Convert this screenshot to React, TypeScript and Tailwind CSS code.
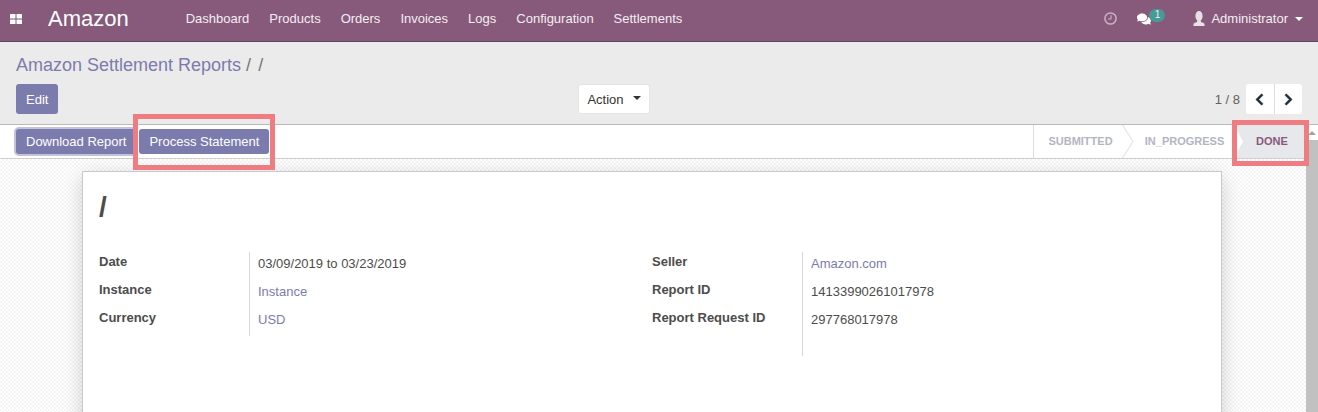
import { FaComments, FaChevronLeft, FaChevronRight } from "react-icons/fa";

const menu = ["Dashboard", "Products", "Orders", "Invoices", "Logs", "Configuration", "Settlements"];

function Caret() {
  return <span className="inline-block h-0 w-0 border-x-4 border-t-4 border-x-transparent border-t-current" />;
}

function Field({ label, value, link, tall }: { label: string; value: string; link?: boolean; tall?: boolean }) {
  return (
    <div className={`flex ${tall ? "h-[48px]" : "h-[28px]"}`}>
      <div className="w-[150px] shrink-0 pt-[1px] text-[13px] leading-[18px] font-bold text-[#4c4c4c]">{label}</div>
      <div
        className={`border-l border-[#d9d7d7] pl-2 pt-[3px] text-[13px] leading-[18px] ${
          link ? "text-[#7c7bad]" : "text-[#4c4c4c]"
        }`}
      >
        {value}
      </div>
    </div>
  );
}

export default function App() {
  return (
    <div className="relative h-[412px] w-[1318px] overflow-hidden bg-white font-['Liberation_Sans',Arial,sans-serif] text-[13px] text-[#4c4c4c]">
      {/* Top navbar */}
      <nav className="flex h-[42px] items-center border-b border-[#5e4a5c] bg-[#875a7b] pb-1 text-white">
        <svg className="ml-[10px] h-[10px] w-[12px]" viewBox="0 0 12 10" fill="#fff">
          <rect x="0" y="0" width="5.5" height="4.5" rx="0.5" />
          <rect x="6.5" y="0" width="5.5" height="4.5" rx="0.5" />
          <rect x="0" y="5.5" width="5.5" height="4.5" rx="0.5" />
          <rect x="6.5" y="5.5" width="5.5" height="4.5" rx="0.5" />
        </svg>
        <span className="ml-[26px] text-[22px] leading-none">Amazon</span>
        <div className="ml-[57px] flex gap-5">
          {menu.map((item) => (
            <span key={item} className="text-[13px] text-[#f3eef2]">
              {item}
            </span>
          ))}
        </div>
        <div className="ml-auto flex items-center">
          <svg className="h-[13px] w-[13px]" viewBox="0 0 13 13" fill="none" stroke="#c9b3c4" strokeWidth="1.5">
            <circle cx="6.5" cy="6.5" r="5.6" />
            <path d="M7 3.2 V7 H4" strokeWidth="1.1" />
          </svg>
          <div className="relative ml-5 mr-[42px]">
            <FaComments className="text-[14px]" />
            <span className="absolute -top-[3px] left-[12px] flex h-[13px] w-[16px] items-center justify-center rounded-full bg-[#479a96] text-[10px] leading-none text-[#e7f3f2]">
              1
            </span>
          </div>
          <svg className="h-[15px] w-[12px]" viewBox="0 0 12 15" fill="#e8e0e6">
            <ellipse cx="6" cy="5" rx="3.6" ry="5" />
            <path d="M4.3 9 H7.7 L8 11 C9.5 11.6 11 12 11.5 13 V15 H0.5 V13 C1 12 2.5 11.6 4 11 Z" />
          </svg>
          <span className="ml-[6px] text-[13px] text-[#f3eef2]">Administrator</span>
          <span className="ml-[7px] mr-[15px] flex text-white">
            <Caret />
          </span>
        </div>
      </nav>

      {/* Control panel */}
      <section className="h-[83px] border-b border-[#b9b9b9] bg-[#ebebeb] pl-4 pr-4">
        <div className="pt-[12px] text-[18px] leading-[23px] text-[#7c7bad]">
          Amazon Settlement Reports <span className="text-[#777]">/</span>
          <span className="ml-[7px] text-[#777]">/</span>
        </div>
        <div className="mt-[7px] flex items-start justify-between">
          <button className="h-[30px] rounded-[3px] bg-[#7c7bad] px-[10px] pt-[1px] text-[13px] text-white">Edit</button>
          <button className="ml-[520px] flex h-[30px] w-[72px] items-center gap-2 rounded-[3px] border border-[#e4e4e4] bg-white pl-[8px] pt-[1px] text-[13px] text-[#333]">
            Action
            <span className="mb-[3px] ml-[1px] flex">
              <Caret />
            </span>
          </button>
          <div className="ml-auto flex items-center">
            <span className="mr-[6px] pt-[1px] text-[13px] text-[#5f5f5f]">1 / 8</span>
            <div className="flex h-[30px] rounded-[3px] bg-white text-[#1d2b3a]">
              <span className="flex w-[29px] items-center justify-center border-r border-[#ddd]">
                <FaChevronLeft className="-ml-[1px] text-[13px]" stroke="currentColor" strokeWidth={24} />
              </span>
              <span className="flex w-[27px] items-center justify-center">
                <FaChevronRight className="text-[13px]" stroke="currentColor" strokeWidth={24} />
              </span>
            </div>
          </div>
        </div>
      </section>

      {/* Status bar */}
      <header className="flex h-[34px] items-center justify-between border-b border-[#cfcfcf] pl-[16px] pr-[12px]">
        <div className="flex gap-[3px]">
          <button className="h-[25px] rounded-[3px] bg-[#7c7bad] px-[10px] text-[13px] text-white ring-2 ring-[#c3c2d9]">
            Download Report
          </button>
          <button className="h-[25px] rounded-[3px] bg-[#7c7bad] px-[10px] text-[13px] text-white">
            Process Statement
          </button>
        </div>
        <div className="flex h-full items-stretch text-[11px] font-bold">
          <div className="flex w-[90px] items-center justify-center border-l border-[#dcdcdc] pl-[4px] text-[#b3b5c1]">SUBMITTED</div>
          <div className="relative flex w-[111px] items-center justify-center pl-[12px] text-[#b3b5c1]">
            <svg className="absolute left-[-1px] top-0 h-[33px] w-[12px]" viewBox="0 0 12 33">
              <path d="M0.5 0 L11 16.5 L0.5 33" fill="none" stroke="#dcdcdc" />
            </svg>
            IN_PROGRESS
          </div>
          <div className="relative flex w-[72px] items-center justify-center bg-[#e6e8ec] pl-[4px] text-[#875a7b]">
            <svg className="absolute left-0 top-0 h-[33px] w-[10px]" viewBox="0 0 10 33">
              <path d="M0 0 L9 16.5 L0 33 Z" fill="#fff" />
            </svg>
            DONE
          </div>
        </div>
      </header>

      {/* Sheet background */}
      <main className="flex h-[254px] pr-[12px] bg-[repeating-conic-gradient(#f5f5f5_0%_25%,#ffffff_0%_50%)] bg-[length:4px_4px]">
        <div className="ml-[82px] mt-[12px] h-[300px] w-[1140px] border border-[#c8c8d3] bg-white pl-4 shadow-[0_5px_20px_-1px_rgba(0,0,0,0.2)]">
          <h1 className="pt-[17px] text-[28px] leading-[36px] font-bold text-[#4c4c4c]">/</h1>
          <div className="mt-[27px] flex">
            <div className="w-[553px]">
              <Field label="Date" value="03/09/2019 to 03/23/2019" />
              <Field label="Instance" value="Instance" link />
              <Field label="Currency" value="USD" link />
            </div>
            <div>
              <Field label="Seller" value="Amazon.com" link />
              <Field label="Report ID" value="14133990261017978" />
              <Field label="Report Request ID" value="297768017978" tall />
            </div>
          </div>
        </div>
      </main>

      {/* Scrollbar */}
      <div className="absolute right-0 top-[125px] flex h-[287px] w-[12px] flex-col items-center bg-white">
        <span className="mt-[6px] h-0 w-0 border-x-[4px] border-b-[4px] border-x-transparent border-b-[#a3a3a3]" />
        <div className="mt-[5px] w-full flex-1 bg-[#c1c1c1]" />
      </div>

      {/* Highlight boxes drawn over the screenshot */}
      <div className="absolute left-[133px] top-[114px] h-[56px] w-[142px] border-[5px] border-[#ef7c80]" />
      <div className="absolute left-[1232px] top-[120px] h-[46px] w-[77px] border-[5px] border-[#ef7c80]" />
    </div>
  );
}
